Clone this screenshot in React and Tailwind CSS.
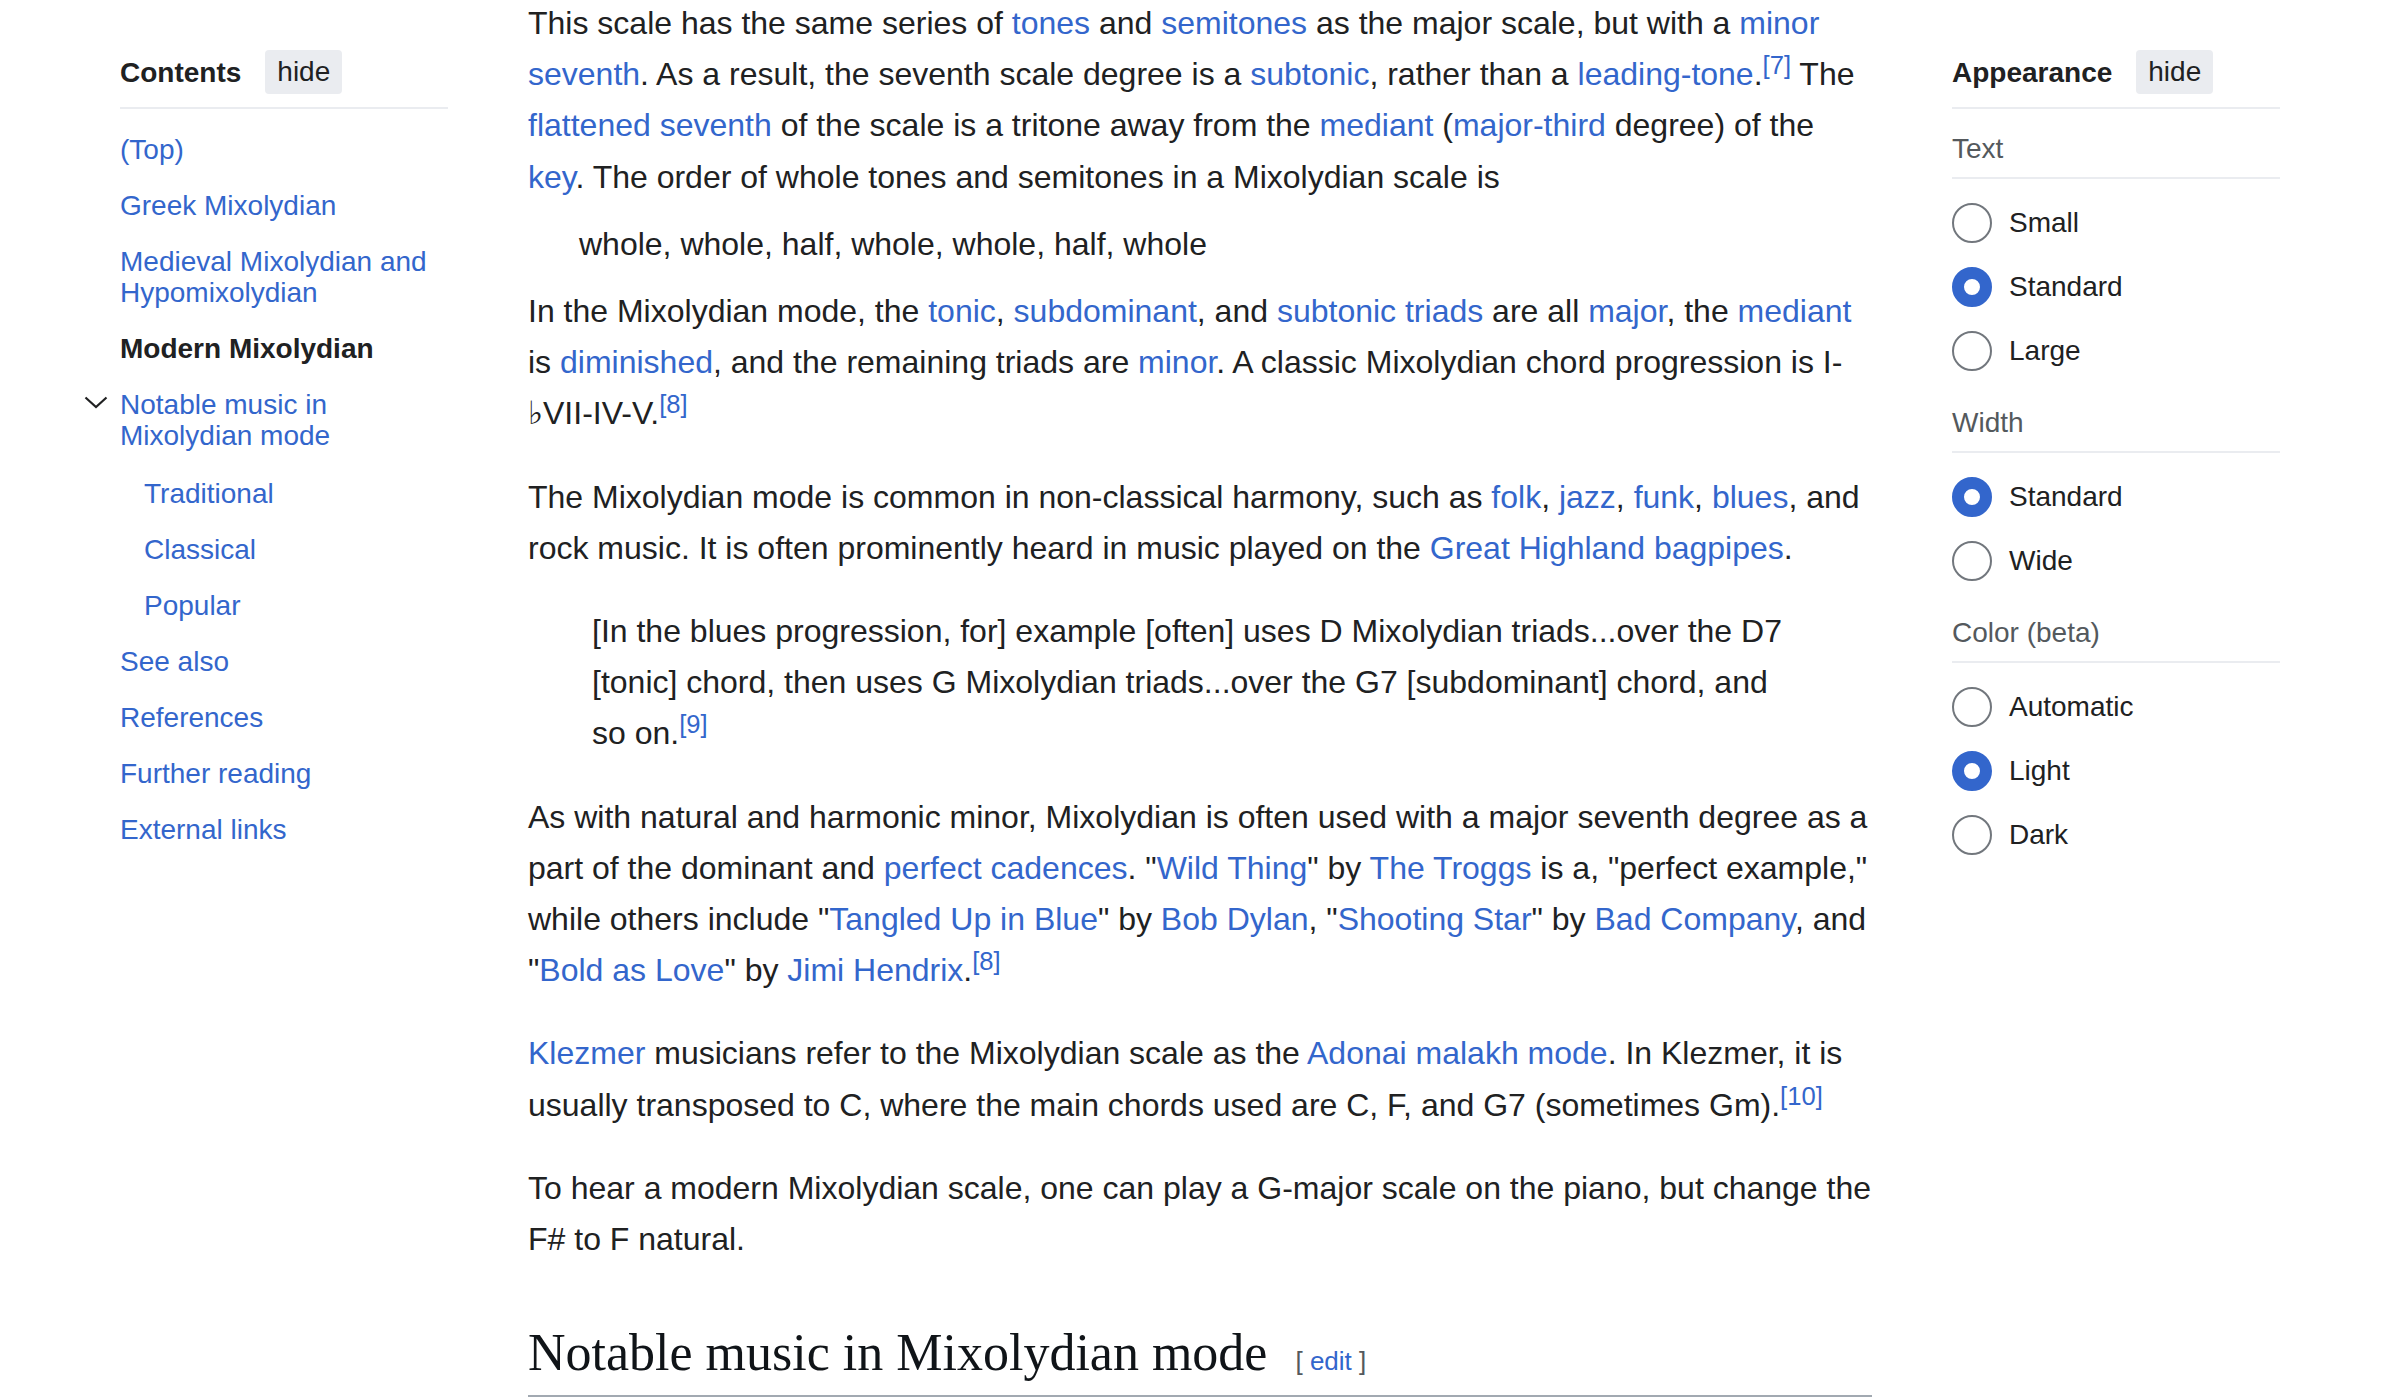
import React from "react";

const A = ({ children }) => <a className="text-[#3366cc]">{children}</a>;

const Ref = ({ n }) => (
  <sup className="top-[-11px] text-[25.6px] text-[#3366cc]">[{n}]</sup>
);

function Radio({ label, checked }) {
  return (
    <div className="flex h-[64px] items-center">
      <span
        className={
          checked
            ? "box-border h-[40px] w-[40px] rounded-full border-[12px] border-[#3366cc] bg-white"
            : "box-border h-[40px] w-[40px] rounded-full border-2 border-[#72777d] bg-white"
        }
      />
      <span className="ml-[17px] text-[28px] leading-[32px] text-[#202122]">
        {label}
      </span>
    </div>
  );
}

function PanelHeader({ title }) {
  return (
    <>
      <div className="mt-[50px] flex h-[44px] items-center gap-[24px]">
        <span className="pt-[2px] text-[28px] font-bold leading-[32px] text-[#202122]">
          {title}
        </span>
        <span className="flex h-[44px] items-center rounded-[4px] bg-[#eaecf0] px-[12px] text-[28px] text-[#202122]">
          hide
        </span>
      </div>
      <div className="mt-[13px] border-b-2 border-[#eaecf0]" />
    </>
  );
}

function Section({ label, options }) {
  return (
    <div className="mt-[24px]">
      <div className="border-b-2 border-[#eaecf0] pb-[12px] text-[28px] leading-[32px] text-[#54595d]">
        {label}
      </div>
      <div className="mt-[12px]">
        {options.map((o) => (
          <Radio key={o.label} label={o.label} checked={o.checked} />
        ))}
      </div>
    </div>
  );
}

const tocItems = [
  { label: "(Top)" },
  { label: "Greek Mixolydian" },
  { label: "Medieval Mixolydian and Hypomixolydian" },
  { label: "Modern Mixolydian", active: true },
];

const tocAfter = ["See also", "References", "Further reading", "External links"];

function TocItem({ label, active }) {
  return (
    <li
      className={`pb-[12px] pt-[13px] text-[28px] leading-[31px] ${
        active ? "font-bold text-[#202122]" : "text-[#3366cc]"
      }`}
    >
      {label}
    </li>
  );
}

export default function App() {
  return (
    <div className="h-[1398px] overflow-hidden bg-white font-['Liberation_Sans',Arial,sans-serif] text-[#202122]">
      <div className="grid grid-cols-[328px_1344px_328px] items-start gap-x-[80px] px-[120px]">
        {/* table of contents */}
        <aside>
          <PanelHeader title="Contents" />
          <ul className="mt-[12px]">
            {tocItems.map((t) => (
              <TocItem key={t.label} label={t.label} active={t.active} />
            ))}
            <li className="relative pb-[12px] pt-[13px] text-[28px] leading-[31px] text-[#3366cc]">
              <svg
                className="absolute left-[-36px] top-[20px]"
                width="24"
                height="13"
                viewBox="0 0 24 13"
                fill="none"
              >
                <path
                  d="M1.5 1.5 L12 11 L22.5 1.5"
                  stroke="#202122"
                  strokeWidth="2.2"
                />
              </svg>
              Notable music in Mixolydian mode
            </li>
            <li className="mt-[2px]">
              <ul className="pl-[24px]">
                <TocItem label="Traditional" />
                <TocItem label="Classical" />
                <TocItem label="Popular" />
              </ul>
            </li>
            {tocAfter.map((t) => (
              <TocItem key={t} label={t} />
            ))}
          </ul>
        </aside>

        {/* article body */}
        <main className="mt-[-2px] text-[32px] leading-[51.2px]">
          <p className="mb-[16px]">
            This scale has the same series of <A>tones</A> and <A>semitones</A>{" "}
            as the major scale, but with a <A>minor seventh</A>. As a result,
            the seventh scale degree is a <A>subtonic</A>, rather than a{" "}
            <A>leading-tone</A>.<Ref n="7" /> The <A>flattened seventh</A> of
            the scale is a tritone away from the <A>mediant</A> (
            <A>major-third</A> degree) of the <A>key</A>. The order of whole
            tones and semitones in a Mixolydian scale is
          </p>
          <dl className="mb-[16px]">
            <dd className="ml-[51px]">
              whole, whole, half, whole, whole, half, whole
            </dd>
          </dl>
          <p className="mb-[32px]">
            In the Mixolydian mode, the <A>tonic</A>, <A>subdominant</A>, and{" "}
            <A>subtonic triads</A> are all <A>major</A>, the <A>mediant</A> is{" "}
            <A>diminished</A>, and the remaining triads are <A>minor</A>. A
            classic Mixolydian chord progression is I-♭VII-IV-V.
            <Ref n="8" />
          </p>
          <p className="mb-[32px]">
            The Mixolydian mode is common in non-classical harmony, such as{" "}
            <A>folk</A>, <A>jazz</A>, <A>funk</A>, <A>blues</A>, and rock
            music. It is often prominently heard in music played on the{" "}
            <A>Great Highland bagpipes</A>.
          </p>
          <blockquote className="mb-[32px] px-[64px]">
            [In the blues progression, for] example [often] uses D Mixolydian
            triads...over the D7 [tonic] chord, then uses G Mixolydian
            triads...over the G7 [subdominant] chord, and so on.
            <Ref n="9" />
          </blockquote>
          <p className="mb-[32px]">
            As with natural and harmonic minor, Mixolydian is often used with a
            major seventh degree as a part of the dominant and{" "}
            <A>perfect cadences</A>. "<A>Wild Thing</A>" by <A>The Troggs</A> is
            a, "perfect example," while others include "
            <A>Tangled Up in Blue</A>" by <A>Bob Dylan</A>, "
            <A>Shooting Star</A>" by <A>Bad Company</A>, and "
            <A>Bold as Love</A>" by <A>Jimi Hendrix</A>.<Ref n="8" />
          </p>
          <p className="mb-[32px]">
            <A>Klezmer</A> musicians refer to the Mixolydian scale as the{" "}
            <A>Adonai malakh mode</A>. In Klezmer, it is usually transposed to
            C, where the main chords used are C, F, and G7 (sometimes Gm).
            <Ref n="10" />
          </p>
          <p>
            To hear a modern Mixolydian scale, one can play a G-major scale on
            the piano, but change the F# to F natural.
          </p>
          <h2 className="mt-[55px] flex items-baseline border-b-2 border-[#a2a9b1] pb-[10px]">
            <span className="font-['Liberation_Serif',Georgia,serif] text-[52px] leading-[65px] text-[#101418]">
              Notable music in Mixolydian mode
            </span>
            <span className="ml-[28px] text-[26px] leading-[30px] text-[#54595d]">
              [ <span className="text-[#3366cc]">edit</span> ]
            </span>
          </h2>
        </main>

        {/* appearance panel */}
        <aside>
          <PanelHeader title="Appearance" />
          <Section
            label="Text"
            options={[
              { label: "Small" },
              { label: "Standard", checked: true },
              { label: "Large" },
            ]}
          />
          <Section
            label="Width"
            options={[{ label: "Standard", checked: true }, { label: "Wide" }]}
          />
          <Section
            label="Color (beta)"
            options={[
              { label: "Automatic" },
              { label: "Light", checked: true },
              { label: "Dark" },
            ]}
          />
        </aside>
      </div>
    </div>
  );
}
